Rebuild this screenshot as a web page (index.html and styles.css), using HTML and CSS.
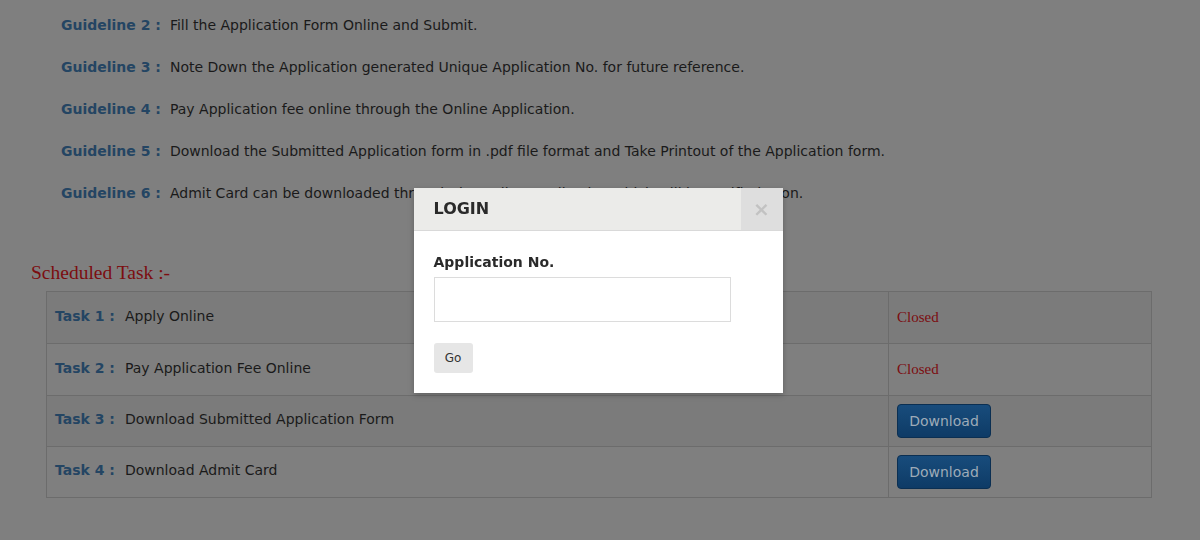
FILE: index.html
```html
<!DOCTYPE html>
<html lang="en">
<head>
<meta charset="utf-8">
<title>Guidelines</title>
<link rel="stylesheet" href="styles.css">
</head>
<body>
<div class="page">
  <ul class="guidelines">
    <li><span class="lbl">Guideline 2 :</span><span class="desc">Fill the Application Form Online and Submit.</span></li>
    <li><span class="lbl">Guideline 3 :</span><span class="desc">Note Down the Application generated Unique Application No. for future reference.</span></li>
    <li><span class="lbl">Guideline 4 :</span><span class="desc">Pay Application fee online through the Online Application.</span></li>
    <li><span class="lbl">Guideline 5 :</span><span class="desc">Download the Submitted Application form in .pdf file format and Take Printout of the Application form.</span></li>
    <li><span class="lbl">Guideline 6 :</span><span class="desc">Admit Card can be downloaded through the Online Application which will be notified soon.</span></li>
  </ul>

  <h2 class="sched">Scheduled Task :-</h2>
  <table class="tasks">
    <tr class="odd r52">
      <td class="c1"><span class="lbl">Task 1 :</span><span class="desc">Apply Online</span></td>
      <td class="c2"><span class="closed">Closed</span></td>
    </tr>
    <tr class="r52">
      <td class="c1"><span class="lbl">Task 2 :</span><span class="desc">Pay Application Fee Online</span></td>
      <td class="c2"><span class="closed">Closed</span></td>
    </tr>
    <tr class="odd r51">
      <td class="c1"><span class="lbl">Task 3 :</span><span class="desc">Download Submitted Application Form</span></td>
      <td class="c2"><button class="dl">Download</button></td>
    </tr>
    <tr class="r51">
      <td class="c1"><span class="lbl">Task 4 :</span><span class="desc">Download Admit Card</span></td>
      <td class="c2"><button class="dl">Download</button></td>
    </tr>
  </table>
</div>

<div class="modal-wrap">
  <div class="modal">
    <div class="modal-head">
      <div class="modal-title">LOGIN</div>
      <div class="modal-close">&times;</div>
    </div>
    <div class="modal-body">
      <label class="field-label">Application No.</label>
      <input class="field" type="text">
      <button class="go">Go</button>
    </div>
  </div>
</div>
</body>
</html>
```

FILE: styles.css
```css
html, body {
  margin: 0;
  padding: 0;
}
body {
  width: 1200px;
  height: 540px;
  overflow: hidden;
  background: #7f7f7f;
  font-family: "DejaVu Sans", Verdana, sans-serif;
  font-size: 14px;
  color: #1a1a1a;
}
.page {
  padding: 15px 48px 0 31px;
}
.guidelines {
  list-style: none;
  margin: 0;
  padding: 0 0 0 30px;
}
.guidelines li {
  line-height: 20px;
  height: 20px;
  margin-bottom: 22px;
  white-space: nowrap;
}
.lbl {
  font-weight: bold;
  color: #244563;
  margin-right: 9px;
}
.tasks .lbl {
  margin-right: 10px;
}
.desc {
  color: #1a1a1a;
}
.sched {
  margin: 59px 0 7px 0;
  font-family: "Liberation Serif", "Times New Roman", serif;
  font-weight: normal;
  font-size: 19.5px;
  line-height: 22px;
  color: #7c0d10;
}
.tasks {
  margin-left: 15px;
  width: 1106px;
  border-collapse: collapse;
}
.tasks td {
  border: 1px solid #6c6c6c;
  padding: 0 8px;
  vertical-align: middle;
}
.tasks tr.odd td {
  background: #7b7b7b;
}
.r52 { height: 52px; }
.r51 { height: 51px; }
.tasks .c1 {
  width: 825px;
  padding-bottom: 4px;
}
.closed {
  font-family: "Liberation Serif", "Times New Roman", serif;
  font-size: 15px;
  color: #7c0d10;
}
.dl {
  width: 94px;
  height: 34px;
  border: 1px solid #0b2f52;
  border-radius: 4px;
  background: linear-gradient(#184c7c, #0e3b66);
  color: #9eabb8;
  font-family: "DejaVu Sans", Verdana, sans-serif;
  font-size: 14px;
  padding: 0;
  display: block;
}

.modal-wrap {
  position: fixed;
  inset: 0;
  display: flex;
  justify-content: center;
  align-items: flex-start;
  padding-top: 188px;
}
.modal {
  width: 369px;
  background: #fff;
  box-shadow: 0 2px 6px rgba(0, 0, 0, 0.25);
  transform: translateX(-2px);
}
.modal-head {
  display: flex;
  height: 42px;
  background: #ebebe9;
  border-bottom: 1px solid #d9d9d9;
}
.modal-title {
  flex: 1;
  padding-left: 20px;
  line-height: 42px;
  font-size: 16px;
  font-weight: bold;
  color: #2a2a2a;
}
.modal-close {
  width: 42px;
  background: #dedede;
  color: #c2c2c2;
  font-size: 20px;
  font-weight: bold;
  line-height: 42px;
  text-align: center;
}
.modal-body {
  padding: 21px 20px 20px 20px;
  display: flex;
  flex-direction: column;
  align-items: flex-start;
}
.field-label {
  font-weight: bold;
  font-size: 14px;
  line-height: 20px;
  color: #2a2a2a;
}
.field {
  box-sizing: border-box;
  width: 297px;
  height: 45px;
  margin-top: 5px;
  border: 1px solid #dcdcdc;
  padding: 0 8px;
  font-size: 14px;
}
.go {
  margin-top: 21px;
  width: 39px;
  height: 30px;
  border: none;
  border-radius: 3px;
  background: #e6e6e6;
  color: #333;
  font-family: "DejaVu Sans", Verdana, sans-serif;
  font-size: 12px;
  padding: 0;
}
```
